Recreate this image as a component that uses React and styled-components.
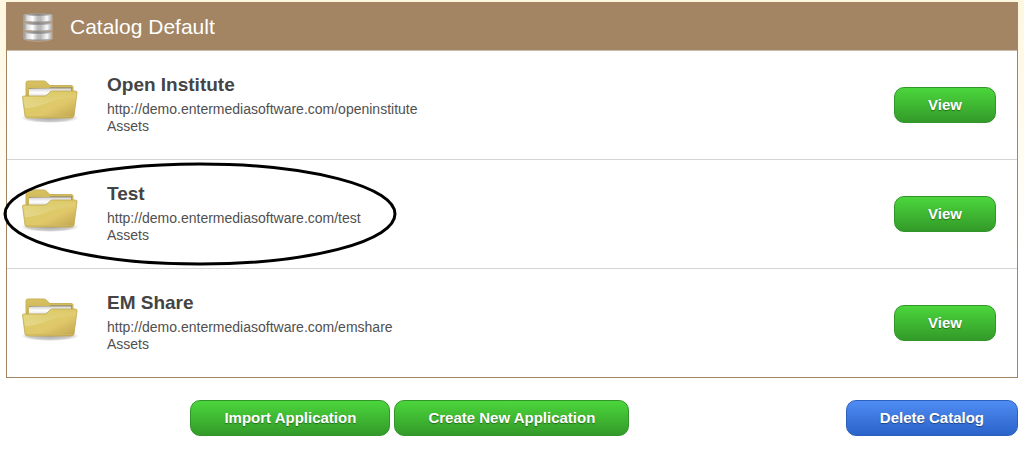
import React from 'react'
import styled, { createGlobalStyle } from 'styled-components'

const applications = [
  { name: 'Open Institute', path: 'openinstitute' },
  { name: 'Test', path: 'test', circled: true },
  { name: 'EM Share', path: 'emshare' },
]

const App = () => {
  return (
    <Page>
      <GlobalStyle />
      <Panel>
        <Header>
          <DatabaseIcon />
          <Title>Catalog Default</Title>
        </Header>
        <List>
          {applications.map(app => (
            <Row key={app.path}>
              <FolderIcon />
              <Details>
                <Name>{app.name}</Name>
                <Line>http://demo.entermediasoftware.com/{app.path}</Line>
                <Line>Assets</Line>
              </Details>
              <Button aria-label={`View ${app.name}`}>View</Button>
              {app.circled && <Circle />}
            </Row>
          ))}
        </List>
      </Panel>
      <Actions>
        <ActionGroup>
          <Button>Import Application</Button>
          <Button>Create New Application</Button>
        </ActionGroup>
        <Button color="blue">Delete Catalog</Button>
      </Actions>
    </Page>
  )
}

export default App

const DatabaseIcon = () => (
  <svg width="32" height="30" viewBox="0 0 32 30" aria-hidden="true">
    <defs>
      <linearGradient id="metal">
        <stop offset="0" stopColor="#9a9a9a" />
        <stop offset="0.12" stopColor="#dcdcdc" />
        <stop offset="0.3" stopColor="#ffffff" />
        <stop offset="0.48" stopColor="#bcbcbc" />
        <stop offset="0.6" stopColor="#b8b8b8" />
        <stop offset="0.82" stopColor="#fafafa" />
        <stop offset="1" stopColor="#a8a8a8" />
      </linearGradient>
      <linearGradient id="rim">
        <stop offset="0" stopColor="#b4b4b4" />
        <stop offset="0.5" stopColor="#858585" />
        <stop offset="1" stopColor="#b4b4b4" />
      </linearGradient>
    </defs>
    <path
      d="M1 3Q16 -1 31 3V27Q28 30 16 30T1 27Z"
      fill="#bcaa94"
      opacity="0.6"
    />
    {[1, 10, 19].map(y => (
      <g key={y} transform={`translate(0 ${y})`}>
        <path d="M2 2Q2 1 16 1T30 2V7Q28 9 16 9T2 7Z" fill="url(#metal)" />
        <path d="M2 2Q2 0.5 16 0.5T30 2Q26 2.8 16 2.8T2 2Z" fill="url(#rim)" />
        <path
          d="M2 7.500Q4 9 16 9T30 7.500"
          fill="none"
          stroke="url(#rim)"
          strokeWidth="0.9"
        />
      </g>
    ))}
  </svg>
)

const FolderIcon = () => (
  <Folder viewBox="0 0 58 46" aria-hidden="true">
    <defs>
      <linearGradient id="front" x2="1" y2="1">
        <stop offset="0" stopColor="#e4d77c" />
        <stop offset="0.35" stopColor="#dccb66" />
        <stop offset="0.6" stopColor="#e0c86a" />
        <stop offset="1" stopColor="#bfa24c" />
      </linearGradient>
      <linearGradient id="back" x2="0" y2="1">
        <stop offset="0" stopColor="#d8c261" />
        <stop offset="1" stopColor="#b39a43" />
      </linearGradient>
      <linearGradient id="paper" x2="0" y2="1">
        <stop offset="0" stopColor="#d4d4d8" />
        <stop offset="0.4" stopColor="#ffffff" />
        <stop offset="1" stopColor="#c4c4c8" />
      </linearGradient>
      <linearGradient id="shine" x2="0" y2="1">
        <stop offset="0" stopColor="#fff" stopOpacity="0" />
        <stop offset="1" stopColor="#fff" stopOpacity="0.24" />
      </linearGradient>
      <radialGradient id="shadow">
        <stop offset="0" stopColor="#000" stopOpacity="0.35" />
        <stop offset="0.7" stopColor="#000" stopOpacity="0.2" />
        <stop offset="1" stopColor="#000" stopOpacity="0" />
      </radialGradient>
    </defs>
    <ellipse cx="29" cy="39" rx="29" ry="5" fill="url(#shadow)" />
    <path
      d="M5 37V4Q5 2 7 2H23Q25 2 26 4L29 6.500H50Q52 6.500 52 8V37Z"
      fill="url(#back)"
      stroke="#c9b25a"
    />
    <path d="M8 20V9H28L30 8H51V20Z" fill="#a3976f" />
    <path d="M8 20V10Q8 9.500 24 9.500L50 9.500V20Z" fill="url(#paper)" />
    <path
      d="M1.500 18Q1.500 17 3 17H23Q25 17 26 16L29 13Q30 12 32 12H54Q56.500 12 56 14L53 37Q52.500 39 50 39H7Q4.500 39 4 37Z"
      fill="url(#front)"
      stroke="#c0a750"
      strokeWidth="0.8"
    />
    <path
      d="M2.500 18H24Q26 18 27 16.500L30 14Q31 13 33 13H55L54.500 18Q38 19 26 24T4 29Z"
      fill="url(#shine)"
    />
    <path d="M5 37.500H52" stroke="#cdb964" strokeWidth="0.8" />
  </Folder>
)

// hand-drawn marker around a row
const Circle = () => (
  <Marker viewBox="0 0 394 104" aria-hidden="true">
    <ellipse
      cx="197"
      cy="52"
      rx="195"
      ry="50"
      fill="none"
      stroke="#000"
      strokeWidth="3"
    />
  </Marker>
)

const GlobalStyle = createGlobalStyle`
  body {
    margin: 0;
    background: #fff linear-gradient(#fef7df, #fff 260px) no-repeat;
    color: #444;
    font-family: 'Liberation Sans', Arial, Helvetica, sans-serif;
  }
`

const Page = styled.main`
  padding: 2px 6px 20px;
`

const Panel = styled.section`
  background-color: #fff;
  border: 1px solid #a38563;
`

const Header = styled.header`
  align-items: center;
  background-color: #a38563;
  border-bottom: 1px solid #c9bbab;
  display: flex;
  gap: 16px;
  height: 47px;
  padding: 0 15px;
`

const Title = styled.h1`
  color: #fff;
  font-size: 21px;
  font-weight: normal;
  line-height: 24px;
  margin: 0;
`

const List = styled.ul`
  list-style: none;
  margin: 0;
  padding: 0;
`

const Row = styled.li`
  align-items: center;
  border-bottom: 1px solid #d5d5d5;
  display: flex;
  padding: 22px 21px 22px 14px;
  position: relative;
  &:last-child {
    border-bottom: 0;
  }
`

const Folder = styled.svg`
  flex: none;
  height: 46px;
  margin-bottom: 6px;
  width: 58px;
`

const Details = styled.div`
  flex: 1;
  margin-left: 28px;
  padding-bottom: 2px;
`

const Name = styled.h2`
  font-size: 19px;
  line-height: 24px;
  margin: 0 0 4px;
`

const Line = styled.p`
  color: #505050;
  font-size: 14px;
  line-height: 17px;
  margin: 0;
`

const Marker = styled.svg`
  height: 104px;
  left: -4px;
  pointer-events: none;
  position: absolute;
  top: 2px;
  width: 394px;
`

const Button = styled.button`
  background: ${({ color }) =>
    color === 'blue'
      ? 'linear-gradient(#4f8cf3, #2a63c9)'
      : 'linear-gradient(#4bd63c, #339a29)'};
  border: 1px solid ${({ color }) => (color === 'blue' ? '#2c60bd' : '#329429')};
  border-radius: 10px;
  color: #fff;
  cursor: pointer;
  font-family: inherit;
  font-size: 15px;
  font-weight: bold;
  line-height: 18px;
  padding: 8px 33px;
  text-shadow: 0 1px 1px rgba(0, 0, 0, 0.4);
`

const Actions = styled.div`
  display: flex;
  justify-content: flex-end;
  margin-top: 22px;
`

const ActionGroup = styled.div`
  display: flex;
  flex: 1;
  gap: 4px;
  justify-content: center;
  padding-right: 32px;
`
